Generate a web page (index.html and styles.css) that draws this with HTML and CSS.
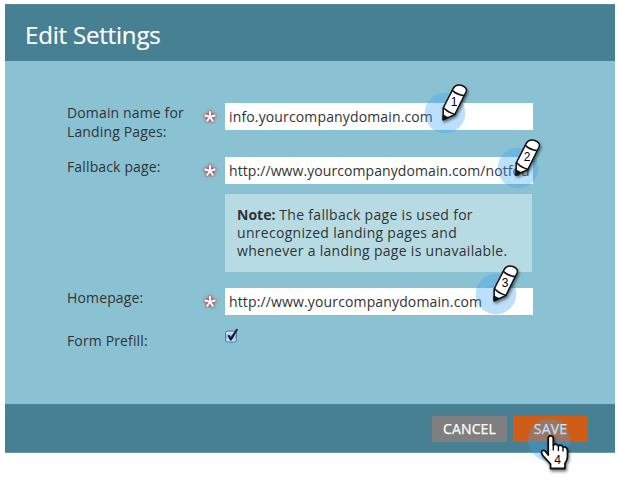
FILE: index.html
```html
<!DOCTYPE html>
<html lang="en">
<head>
<meta charset="utf-8">
<title>Edit Settings</title>
<link rel="stylesheet" href="styles.css">
</head>
<body>
<svg class="defs" width="0" height="0" aria-hidden="true">
  <symbol id="pencil" viewBox="0 0 60 60">
    <circle cx="25" cy="35" r="20.3" fill="#38a5f7" fill-opacity=".35"/>
    <g class="shadow" stroke="#111" stroke-width="1.5" stroke-linejoin="round" stroke-linecap="round">
      <path d="M23.2 41.8 23.2 30 33.4 10.2Q35.8 5.6 42 7.5Q47.8 10 46 14L34.8 36.6Z" fill="#fff"/>
      <path d="M32.6 12.6Q37 16.6 44 17.6M23.6 29.8Q28 34.6 34.6 36.2" fill="none" stroke-width="1.6"/>
      <path d="M23.2 37.4 27.2 39.4 23.2 41.8Z" fill="#111"/>
    </g>
  </symbol>
  <symbol id="star" viewBox="0 0 16 16">
    <path d="M8 8V2.2M8 8 2.6 6.3M8 8 4.8 12.5M8 8 11.2 12.5M8 8 13.4 6.3" stroke="#fff" stroke-width="2.1"/>
  </symbol>
</svg>
<main class="dialog">
  <header class="dialog-header"><h1>Edit Settings</h1></header>
  <form class="form">
    <div class="row">
      <label>Domain name for<br>Landing Pages:</label>
      <svg class="star"><use href="#star"/></svg>
      <div class="field"><span>info.yourcompanydomain.com</span>
        <svg class="marker m1"><use href="#pencil"/><text x="34" y="28">1</text></svg>
      </div>
    </div>
    <div class="row row-fallback">
      <label>Fallback page:</label>
      <svg class="star"><use href="#star"/></svg>
      <div class="field"><span>http://www.yourcompanydomain.com/notfou</span>
        <svg class="marker m2"><use href="#pencil"/><text x="34" y="28">2</text></svg>
      </div>
    </div>
    <p class="note"><b>Note:</b> The fallback page is used for<br>unrecognized landing pages and<br>whenever a landing page is unavailable.</p>
    <div class="row row-home">
      <label>Homepage:</label>
      <svg class="star"><use href="#star"/></svg>
      <div class="field"><span>http://www.yourcompanydomain.com</span>
        <svg class="marker m3"><use href="#pencil"/><text x="34" y="28">3</text></svg>
      </div>
    </div>
    <div class="row row-prefill">
      <label>Form Prefill:</label>
      <svg class="check" viewBox="0 0 14 15">
        <defs><linearGradient id="box" x2="0" y2="1"><stop stop-color="#f0f6fd"/><stop offset=".45" stop-color="#8dbdec"/><stop offset="1" stop-color="#d5efff"/></linearGradient></defs>
        <rect x=".6" y="3.2" width="10.8" height="10.8" rx="2" fill="url(#box)" stroke="#52739e"/>
        <path d="M3 7.7 4.4 7.2 5.8 9.5 11.4 1.2 12.8 1.4 6.4 12.2 5.2 12.2Z" fill="#07112b" stroke="#07112b" stroke-width=".5"/>
      </svg>
    </div>
  </form>
  <footer class="dialog-footer">
    <button class="btn cancel" type="button"><span>CANCEL</span></button>
    <button class="btn save" type="button"><span>SAVE</span>
      <svg class="marker m4" viewBox="0 0 60 60">
        <circle cx="25" cy="25" r="21" fill="#38a5f7" fill-opacity=".35"/>
        <g class="shadow" stroke="#111" stroke-width="1.8" stroke-linejoin="round" stroke-linecap="round">
          <path d="M24.2 37.5V23.2Q24.5 20.5 27 20.8Q29.3 21 29.3 23.5V30Q32.5 28 34.4 31Q37 29 39 32Q43.5 31.5 43.5 36V42Q43.3 45 41 48.5V53.5H26.5V49L18.8 40.5Q16.5 36.5 18.2 35.8Q20.5 34.5 22.6 37.8L24.2 40Z" fill="#fff"/>
          <path d="M29.3 30V35M34.4 31V35.5M39 32.5V36" fill="none" stroke-width="1.4"/>
        </g>
        <text x="33.5" y="49">4</text>
      </svg>
    </button>
  </footer>
</main>
</body>
</html>
```
FILE: styles.css
```css
* { box-sizing: border-box; }
html { height: 100%; }
body { display: flow-root; height: 100%; margin: 0; background: #fff; font-family: "Open Sans", sans-serif; color: #333; }
.defs { position: absolute; }
.dialog { display: flex; flex-direction: column; width: 610px; height: 449px; margin: 4px 0 0 5px; background: #8ac2d3; }
.dialog-header { height: 57px; padding-left: 20px; background: #478092; border-top: 1px solid #5c8999; }
h1 { margin: 0; color: #fff; font-size: 24px; line-height: 59px; font-weight: 400; letter-spacing: -.18px; -webkit-text-stroke: .2px #fff; }
.form { flex: 1; padding: 42px 0 0 62px; font-size: 14px; }
.row { display: grid; grid-template-columns: 134px 24px 308px; height: 54px; align-items: start; }
label { line-height: 19px; letter-spacing: .14px; }
.star { width: 16px; height: 16px; margin-top: 6px; margin-left: 1px; filter: drop-shadow(0 0 1px #b83a3a) drop-shadow(0 0 1.5px #b55252); }
.field { position: relative; height: 27px; background: #fff; padding-left: 4px; line-height: 28px; white-space: nowrap; letter-spacing: .14px; }
.row-fallback { height: 37px; }
.row-fallback .field { letter-spacing: .08px; }
.note { width: 307px; height: 78px; margin: 0 0 16px 158px; padding: 12px; background: #b6dbe3; line-height: 18px; letter-spacing: .3px; }
.note b { letter-spacing: 0; }
.row-home { height: 43px; }
.row-prefill .check { grid-column: 3; width: 14px; height: 15px; margin-top: -3px; }
.marker { position: absolute; width: 60px; height: 60px; overflow: visible; z-index: 2; pointer-events: none; }
.marker text { font: 12px "Liberation Sans", sans-serif; fill: #000; text-anchor: middle; letter-spacing: 0; -webkit-text-stroke: 0; }
.shadow { filter: drop-shadow(1px 2px 1.5px rgba(0, 0, 0, .55)); }
.m1 { left: 194.7px; top: -25.3px; }
.m2 { left: 267.7px; top: -24px; }
.m3 { left: 245.7px; top: -29.3px; }
.dialog-footer { display: flex; justify-content: flex-end; gap: 6px; height: 49px; padding: 12px 27px 0 0; background: #478092; border-bottom: 1px solid #659baa; }
.btn { position: relative; overflow: visible; width: 75px; height: 26px; padding: 0; border: 0; color: #fff; font: 14px/26px "Open Sans", sans-serif; letter-spacing: .15px; -webkit-text-stroke: .25px #fff; }
.cancel { background: #7f7f7f; }
.save { background: #cf5d18; }
.m4 { left: 11px; top: -1px; }
```
